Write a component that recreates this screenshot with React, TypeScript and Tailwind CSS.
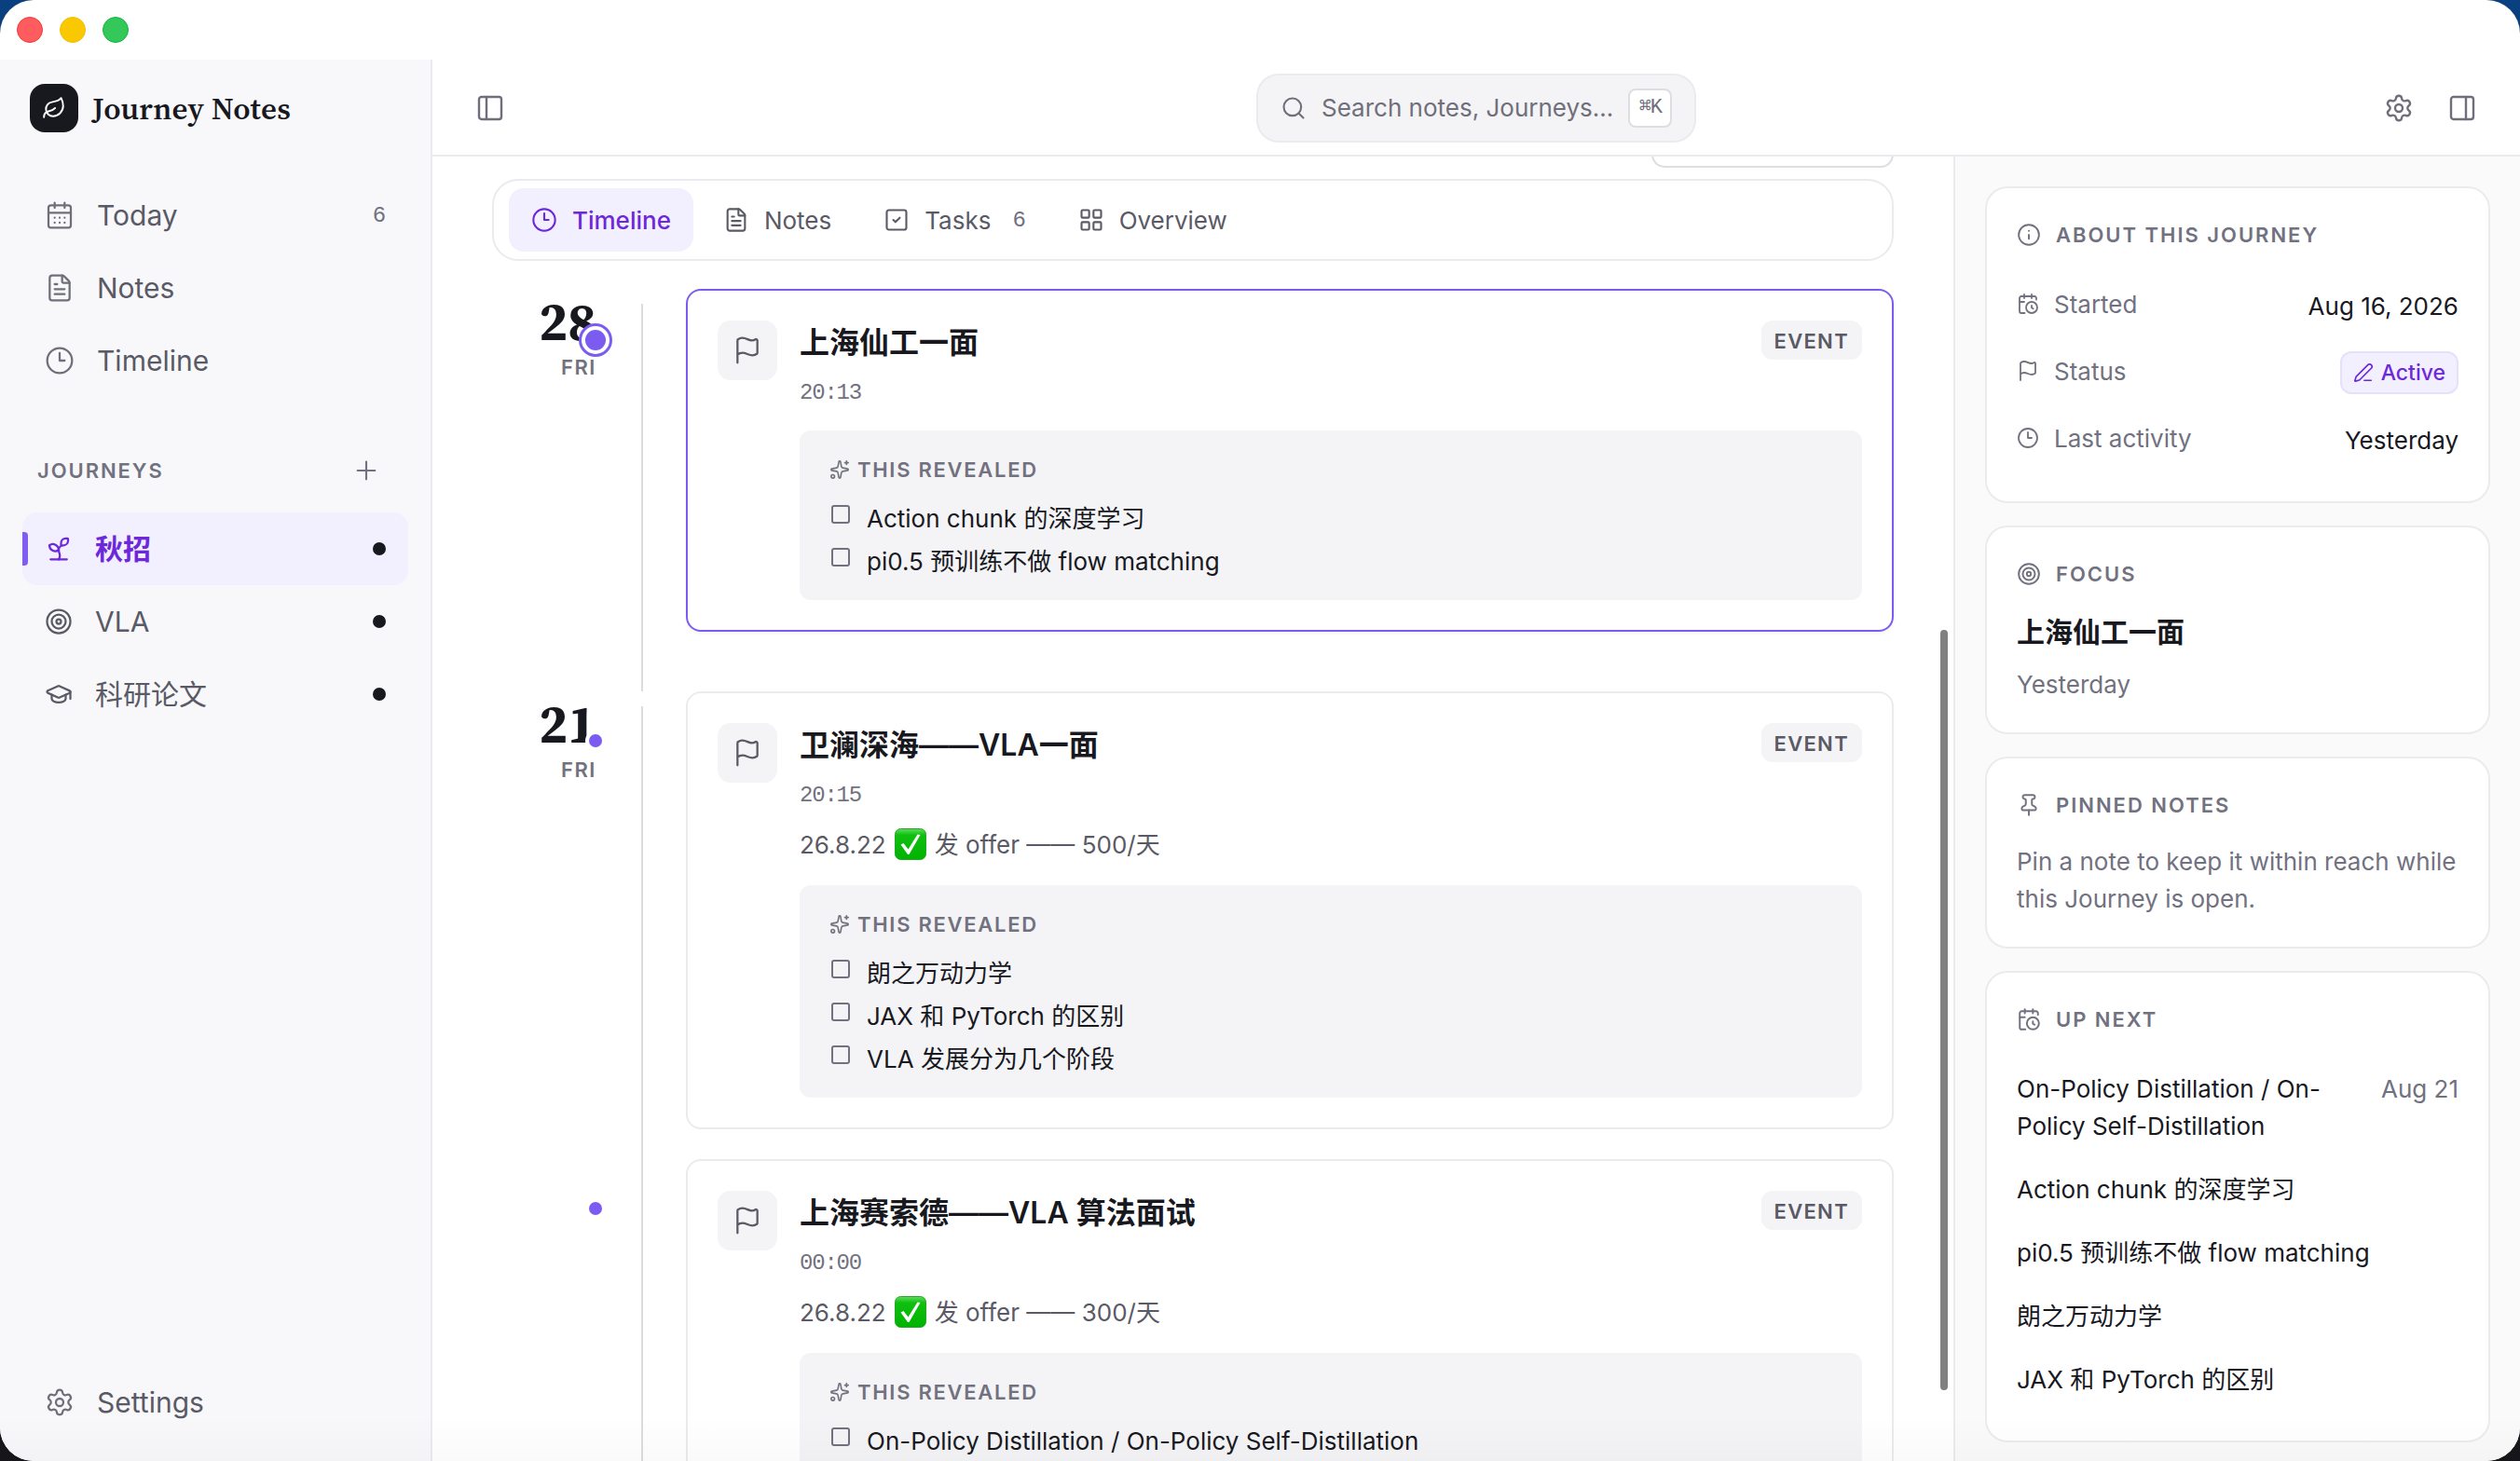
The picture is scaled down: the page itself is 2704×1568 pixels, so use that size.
import type {ReactNode} from "react";
import clsx from "clsx";
import {
    CalendarClock,
    CalendarDays,
    Clock3,
    FileText,
    Flag,
    GraduationCap,
    Info,
    LayoutGrid,
    Leaf,
    PanelLeft,
    PanelRight,
    PenLine,
    Pin,
    Plus,
    Search,
    Settings,
    Sparkles,
    Sprout,
    SquareCheck,
    Target,
    type LucideIcon,
} from "lucide-react";

type Entry = {
    title: string;
    time: string;
    offer?: string;
    revealed: string[];
    selected?: boolean;
}

type Day = {
    day: string;
    weekday: string;
    entries: Entry[];
}

const days: Day[] = [
    {
        day: "28",
        weekday: "FRI",
        entries: [
            {
                title: "上海仙工一面",
                time: "20:13",
                revealed: ["Action chunk 的深度学习", "pi0.5 预训练不做 flow matching"],
                selected: true,
            },
        ],
    },
    {
        day: "21",
        weekday: "FRI",
        entries: [
            {
                title: "卫澜深海——VLA一面",
                time: "20:15",
                offer: "500/天",
                revealed: ["朗之万动力学", "JAX 和 PyTorch 的区别", "VLA 发展分为几个阶段"],
            },
            {
                title: "上海赛索德——VLA 算法面试",
                time: "00:00",
                offer: "300/天",
                revealed: ["On-Policy Distillation / On-Policy Self-Distillation"],
            },
        ],
    },
];

const upNext = [
    {label: "On-Policy Distillation / On-Policy Self-Distillation", date: "Aug 21"},
    {label: "Action chunk 的深度学习"},
    {label: "pi0.5 预训练不做 flow matching"},
    {label: "朗之万动力学"},
    {label: "JAX 和 PyTorch 的区别"},
];

const mono = "font-['Liberation_Mono','DejaVu_Sans_Mono',monospace] tracking-[-0.05em]";
const serif = "font-['Source_Serif_4','Noto_Serif_CJK_SC','Liberation_Serif',serif]";

const NavItem = ({icon: Icon, label, count}: {icon: LucideIcon; label: string; count?: number}) => (
    <div className="flex h-[78px] items-center px-6 text-[30px] text-[#5a5a66]">
        <Icon size={32} strokeWidth={1.7} className="mr-6 text-[#6f6f7c]"/>
        <span className="flex-1">{label}</span>
        {count && <span className={clsx(mono, "mr-px pt-0.5 text-[24px] text-[#71717f]")}>{count}</span>}
    </div>
)

const JourneyItem = ({icon: Icon, label, active}: {icon: LucideIcon; label: string; active?: boolean}) => (
    <div
        className={clsx(
            "relative flex h-[78px] items-center rounded-2xl px-6 text-[30px]",
            active ? "bg-[#f2effe] font-semibold text-[#6d28d9]" : "text-[#5a5a66]"
        )}
    >
        {active && <span className="absolute left-0 top-[21px] h-9 w-1.5 rounded-r bg-[#7f5df0]"/>}
        <Icon size={30} strokeWidth={1.8} className="mr-6"/>
        <span className="flex-1">{label}</span>
        <span className="size-3.5 rounded-full bg-[#18181f]"/>
    </div>
)

const Sidebar = () => (
    <aside className="flex w-[464px] shrink-0 flex-col border-r-2 border-[#ebebef] bg-[#f8f8fb] px-6">
        <div className="flex h-[104px] items-center pl-2">
            <div className="flex size-[52px] items-center justify-center rounded-2xl bg-[#18181f] text-white">
                <Leaf size={26} strokeWidth={1.8}/>
            </div>
            <span className={clsx(serif, "ml-[15px] pt-0.5 text-[33px] font-semibold tracking-[0.007em] text-[#18181f]")}>Journey Notes</span>
        </div>
        <nav className="pt-6">
            <NavItem icon={CalendarDays} label="Today" count={6}/>
            <NavItem icon={FileText} label="Notes"/>
            <NavItem icon={Clock3} label="Timeline"/>
        </nav>
        <div className="mb-[13px] mt-[47px] flex h-16 items-center justify-between pl-4 pr-[29px] text-[#71717f]">
            <span className="text-[22px] font-semibold tracking-[0.088em]">JOURNEYS</span>
            <Plus size={32} strokeWidth={1.6}/>
        </div>
        <JourneyItem icon={Sprout} label="秋招" active/>
        <JourneyItem icon={Target} label="VLA"/>
        <JourneyItem icon={GraduationCap} label="科研论文"/>
        <div className="mb-6 mt-auto">
            <NavItem icon={Settings} label="Settings"/>
        </div>
    </aside>
)

const TopBar = () => (
    <header className="flex h-[104px] shrink-0 items-center border-b-2 border-[#ebebef] px-[46px] pt-px text-[#6f6f7c]">
        <PanelLeft size={32} strokeWidth={1.8}/>
        <div className="ml-[806px] flex h-[74px] w-[472px] items-center rounded-3xl border-2 border-[#ebebef] bg-[#f4f4f6] pl-6">
            <Search size={28} strokeWidth={1.8}/>
            <span className="ml-4 text-[26px]">Search notes, Journeys…</span>
            <kbd className={clsx(mono, "ml-4 flex h-[42px] w-[47px] items-center justify-center rounded-lg border-2 border-[#dddde2] bg-white text-[22px]")}>
                ⌘K
            </kbd>
        </div>
        <div className="ml-auto flex gap-9">
            <Settings size={32} strokeWidth={1.8}/>
            <PanelRight size={32} strokeWidth={1.8}/>
        </div>
    </header>
)

const Tab = ({icon: Icon, label, count, active}: {icon: LucideIcon; label: string; count?: number; active?: boolean}) => (
    <div
        className={clsx(
            "flex h-[68px] items-center gap-4 rounded-2xl px-6 text-[26px]",
            active ? "bg-[#f2effe] font-medium text-[#6d28d9]" : "text-[#5a5a66]"
        )}
    >
        <Icon size={28} strokeWidth={1.8}/>
        <span>{label}</span>
        {count && <span className={clsx(mono, "ml-[7px] mr-px pt-0.5 text-[24px] text-[#71717f]")}>{count}</span>}
    </div>
)

const CheckMark = () => (
    <svg viewBox="0 0 34 34" className="mx-[9px] size-[34px]">
        <defs>
            <linearGradient id="check" x1="0" y1="0" x2="0" y2="1">
                <stop offset="0" stopColor="#5fdc60"/>
                <stop offset="0.2" stopColor="#10c010"/>
                <stop offset="1" stopColor="#00b300"/>
            </linearGradient>
        </defs>
        <rect x="0.5" y="0.5" width="33" height="33" rx="6" fill="url(#check)" stroke="#25a825"/>
        <path d="M6.5 17.5 L9.5 16 L14.5 22.5 L24.5 6.5 L27.5 7 L15.5 28 L14 28 Z" fill="#fff"/>
    </svg>
)

const EventCard = ({entry}: {entry: Entry}) => (
    <article
        className={clsx(
            "relative flex rounded-2xl border-2 bg-white p-8",
            entry.selected ? "border-[#7c5cf0] shadow-[0_2px_4px_rgba(0,0,0,0.04)]" : "border-[#ebebef]"
        )}
    >
        {/* marker sits in the gutter, left of the rail */}
        {entry.selected
            ? <span className="absolute -left-[117px] top-[35px] flex size-9 items-center justify-center rounded-full border-[3px] border-[#7c5cf0] bg-white">
                <span className="size-[22px] rounded-full bg-[#7c5cf0]"/>
            </span>
            : <span className="absolute -left-[110px] top-[40px] flex size-[22px] items-center justify-center rounded-full bg-white">
                <span className="size-3.5 rounded-full bg-[#7c5cf0]"/>
            </span>}
        <div className="flex size-16 shrink-0 items-center justify-center rounded-[14px] bg-[#f4f4f6] text-[#5a5a66]">
            <Flag size={32} strokeWidth={1.7}/>
        </div>
        <div className="ml-6 flex-1">
            <div className="flex h-[46px] items-start justify-between">
                <h3 className="pt-px text-[32px] font-semibold leading-[46px] text-[#18181f]">{entry.title}</h3>
                <span className="flex h-[42px] items-center rounded-xl bg-[#f4f4f6] px-3.5 pt-0.5 text-[22px] font-semibold tracking-[0.06em] text-[#5a5a66]">EVENT</span>
            </div>
            <div className={clsx(mono, "mt-4 text-[24px] leading-[32px] text-[#71717f]")}>{entry.time}</div>
            {entry.offer && (
                <div className="mt-4 flex h-[40px] items-center text-[26px] text-[#5a5a66]">
                    26.8.22 <CheckMark/> 发 offer —— {entry.offer}
                </div>
            )}
            <div className="mt-6 rounded-xl bg-[#f4f4f6] px-8 pb-[18px] pt-[26px]">
                <div className="mb-3.5 flex h-8 items-center text-[22px] font-semibold tracking-[0.078em] text-[#71717f]">
                    <Sparkles size={22} strokeWidth={1.8} className="mr-2"/>
                    THIS REVEALED
                </div>
                {entry.revealed.map((item) => (
                    <div key={item} className="flex h-[46px] items-start text-[26px] leading-[46px] text-[#18181f]">
                        <span className="ml-0.5 mr-[18px] mt-2 size-5 shrink-0 rounded-[3px] border-2 border-[#71717f]"/>
                        {item}
                    </div>
                ))}
            </div>
        </div>
    </article>
)

const Timeline = () => (
    <div className="mt-[30px]">
        {days.map((day) => (
            <section key={day.day} className="flex pb-16">
                <div className="flex w-[112px] flex-col items-end pt-0.5">
                    <span className={clsx(serif, "text-[57px] font-bold leading-[66px] text-[#18181f]")}>{day.day}</span>
                    <span className="text-[22px] font-semibold leading-[32px] tracking-[0.07em] text-[#71717f]">{day.weekday}</span>
                </div>
                <div className="-mb-16 ml-12 mr-[46px] mt-4 w-0.5 bg-[#dcdce0]"/>
                <div className="flex flex-1 flex-col gap-8">
                    {day.entries.map((entry) => <EventCard key={entry.title} entry={entry}/>)}
                </div>
            </section>
        ))}
    </div>
)

const Card = ({icon: Icon, title, children}: {icon: LucideIcon; title: string; children: ReactNode}) => (
    <section className="rounded-3xl border-2 border-[#ebebef] bg-white p-8">
        <div className="mb-6 flex h-[35px] items-center text-[22px] font-semibold tracking-[0.09em] text-[#71717f]">
            <Icon size={26} strokeWidth={1.8} className="mr-4"/>
            <span className="pt-0.5">{title}</span>
        </div>
        {children}
    </section>
)

const Fact = ({icon: Icon, label, children}: {icon: LucideIcon; label: string; children: ReactNode}) => (
    <div className="flex h-[72px] items-center text-[26px]">
        <Icon size={24} strokeWidth={1.8} className="mb-1 mr-4 text-[#71717f]"/>
        <span className="mb-1 flex-1 text-[#71717f]">{label}</span>
        <span className="text-[#18181f]">{children}</span>
    </div>
)

const Inspector = () => (
    <aside className="flex w-[608px] shrink-0 flex-col gap-6 border-l-2 border-[#ebebef] bg-[#fafafa] px-8 pt-8">
        <Card icon={Info} title="ABOUT THIS JOURNEY">
            <div className="-mb-0.5 -mt-px">
                <Fact icon={CalendarClock} label="Started">Aug 16, 2026</Fact>
                <Fact icon={Flag} label="Status">
                    <span className="flex h-[46px] items-center gap-2 rounded-xl border-2 border-[#e6e0fc] bg-[#f2effe] px-3 text-[23px] font-medium text-[#6d28d9]">
                        <PenLine size={22} strokeWidth={1.8}/>
                        Active
                    </span>
                </Fact>
                <Fact icon={Clock3} label="Last activity">Yesterday</Fact>
            </div>
        </Card>
        <Card icon={Target} title="FOCUS">
            <div className="text-[30px] font-semibold leading-[42px] text-[#18181f]">上海仙工一面</div>
            <div className="mt-4 text-[26px] leading-[39px] text-[#71717f]">Yesterday</div>
        </Card>
        <Card icon={Pin} title="PINNED NOTES">
            <p className="text-[26px] leading-[39.5px] text-[#71717f]">
                Pin a note to keep it within reach while this Journey is open.
            </p>
        </Card>
        <Card icon={CalendarClock} title="UP NEXT">
            <div className="-mb-px">
                {upNext.map((item) => (
                    <div key={item.label} className="flex justify-between py-3.5 text-[26px] leading-[40px] text-[#18181f]">
                        <span className={clsx(item.date && "w-[340px]")}>{item.label}</span>
                        {item.date && <span className="text-[#71717f]">{item.date}</span>}
                    </div>
                ))}
            </div>
        </Card>
    </aside>
)

const App = () => {
    return (
        <div className="h-[1568px] w-[2704px] overflow-hidden bg-linear-to-b from-[#0a4080] to-[#16161a] font-['Inter','Noto_Sans_CJK_SC',sans-serif]">
            <div className="relative flex h-full flex-col overflow-hidden rounded-[36px] bg-white">
                <div className="flex h-16 shrink-0 items-center gap-[18px] pl-[18px]">
                    <span className="size-7 rounded-full border border-[#f2383f] bg-[#ff5c60]"/>
                    <span className="size-7 rounded-full border border-[#f2bd00] bg-[#fac800]"/>
                    <span className="size-7 rounded-full border border-[#12b83c] bg-[#34c759]"/>
                </div>
                <div className="flex min-h-0 flex-1">
                    <Sidebar/>
                    <div className="flex min-w-0 flex-1 flex-col">
                        <TopBar/>
                        <div className="flex min-h-0 flex-1">
                            <main className="relative min-w-0 flex-1 overflow-hidden px-16">
                                <div className="ml-auto -mt-12 h-[60px] w-[260px] rounded-[14px] border-2 border-[#dddde2]"/>
                                <div className="mt-3 flex h-[88px] items-center gap-2 rounded-[28px] border-2 border-[#ebebef] px-4">
                                    <Tab icon={Clock3} label="Timeline" active/>
                                    <Tab icon={FileText} label="Notes"/>
                                    <Tab icon={SquareCheck} label="Tasks" count={6}/>
                                    <Tab icon={LayoutGrid} label="Overview"/>
                                </div>
                                <Timeline/>
                                <div className="absolute right-1.5 top-[508px] h-[816px] w-2 rounded-full bg-[#808080]"/>
                            </main>
                            <Inspector/>
                        </div>
                    </div>
                </div>
                {/* soft darkening along the window's bottom edge */}
                <div className="pointer-events-none absolute inset-x-0 bottom-0 h-12 bg-linear-to-b from-transparent to-black/[0.02]"/>
            </div>
        </div>
    )
}

export default App;
